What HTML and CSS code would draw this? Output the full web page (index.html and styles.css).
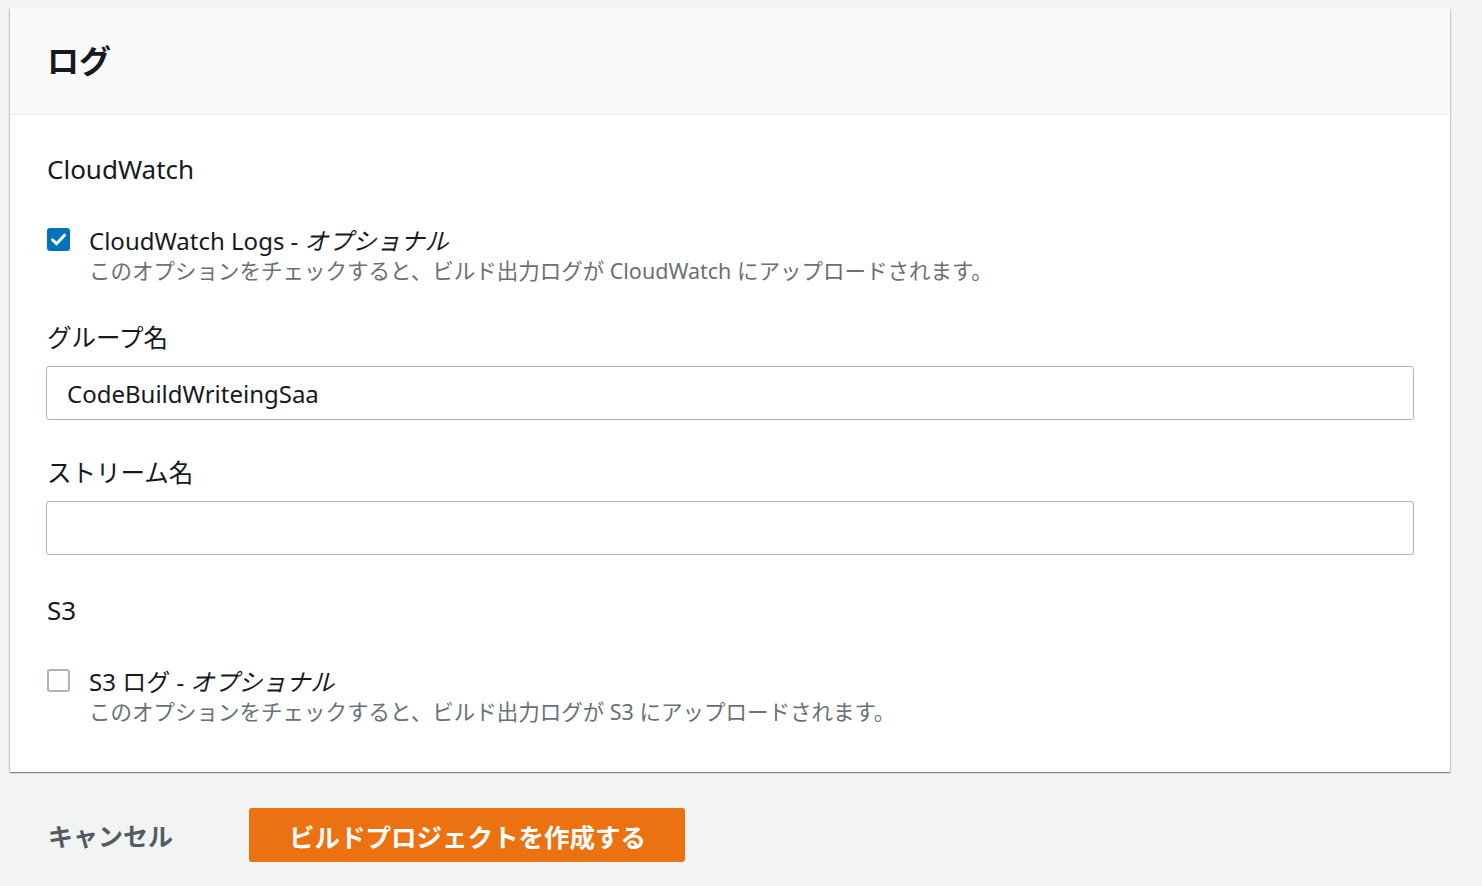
FILE: index.html
```html
<!DOCTYPE html>
<html lang="ja">
<head>
    <meta charset="UTF-8">
    <title>ログ</title>
    <link rel="stylesheet" href="styles.css">
</head>
<body>

<div class="page">
    <div class="card">
        <div class="card-header">
            <h2>ログ</h2>
        </div>
        <div class="card-body">
            <h3>CloudWatch</h3>

            <label class="check-row">
                <span class="checkbox checked">
                    <svg width="23" height="23" viewBox="0 0 23 23"><path d="M5.5 11.8l4 4 8-8.6" fill="none" stroke="#fff" stroke-width="3" stroke-linecap="round" stroke-linejoin="round"/></svg>
                </span>
                <span class="check-text">
                    <span class="check-label">CloudWatch Logs - <i>オプショナル</i></span>
                    <span class="check-desc">このオプションをチェックすると、ビルド出力ログが CloudWatch にアップロードされます。</span>
                </span>
            </label>

            <div class="field">
                <label for="group">グループ名</label>
                <input type="text" id="group" value="CodeBuildWriteingSaa">
            </div>

            <div class="field">
                <label for="stream">ストリーム名</label>
                <input type="text" id="stream" value="">
            </div>

            <h3 class="s3">S3</h3>

            <label class="check-row">
                <span class="checkbox"></span>
                <span class="check-text">
                    <span class="check-label">S3 ログ - <i>オプショナル</i></span>
                    <span class="check-desc">このオプションをチェックすると、ビルド出力ログが S3 にアップロードされます。</span>
                </span>
            </label>
        </div>
    </div>

    <div class="actions">
        <button class="btn-link">キャンセル</button>
        <button class="btn-primary">ビルドプロジェクトを作成する</button>
    </div>
</div>

</body>
</html>
```

FILE: styles.css
```css
body {
    margin: 0;
    background-color: #f2f3f3;
    font-family: "Noto Sans", "Noto Sans CJK JP", sans-serif;
    color: #16191f;
}

.page {
    padding: 8px 32px 0 10px;
}

.card {
    background: #fff;
    box-shadow: 0 1px 1px 0 rgba(0, 28, 36, 0.3), 1px 1px 1px 0 rgba(0, 28, 36, 0.15), -1px 1px 1px 0 rgba(0, 28, 36, 0.15);
}

.card-header {
    background: #fafafa;
    border-bottom: 1px solid #eaeded;
    height: 106px;
    padding: 0 37px;
    display: flex;
    align-items: center;
}

.card-header h2 {
    margin: 0 0 4px;
    font-size: 32px;
    font-weight: bold;
}

.card-body {
    padding: 36px 36px 44px 36px;
}

h3 {
    margin: 0 0 0 1px;
    font-size: 26px;
    font-weight: normal;
    line-height: 36px;
}

.check-row {
    display: flex;
    gap: 19px;
    margin-top: 40px;
}

.checkbox {
    flex: none;
    width: 19px;
    height: 19px;
    border: 2px solid #aab7b8;
    border-radius: 3px;
    margin-top: 1px;
    margin-left: 1px;
    position: relative;
}

.checkbox.checked {
    background: #0073bb;
    border-color: #0073bb;
}

.checkbox svg {
    position: absolute;
    left: -2px;
    top: -2px;
}

.check-text {
    display: flex;
    flex-direction: column;
}

.check-label {
    font-size: 24px;
    line-height: 28px;
}

.check-label i {
    font-style: italic;
}

.check-desc {
    font-size: 21.5px;
    line-height: 32px;
    color: #687078;
}

.field {
    margin-top: 33px;
}

.field label {
    display: block;
    font-size: 24.5px;
    line-height: 36px;
    margin-bottom: 10px;
    padding-left: 1px;
}

.field input {
    display: block;
    box-sizing: border-box;
    width: 100%;
    height: 54px;
    padding: 0 20px;
    border: 1px solid #aab7b8;
    border-radius: 3px;
    font-family: inherit;
    font-size: 24px;
    color: #16191f;
}

.field + .field {
    margin-top: 35px;
}

h3.s3 {
    margin-top: 37px;
}

.actions {
    display: flex;
    align-items: center;
    gap: 40px;
    margin-top: 36px;
    padding-left: 38px;
}

.btn-link {
    background: none;
    border: none;
    font-family: inherit;
    font-size: 25px;
    font-weight: bold;
    color: #545b64;
    padding: 0;
    width: 161px;
    text-align: left;
}

.btn-primary {
    background: #ec7211;
    border: none;
    border-radius: 3px;
    height: 54px;
    padding: 0 39px 0 40px;
    font-family: inherit;
    font-size: 25.5px;
    font-weight: bold;
    color: #fff;
}
```
